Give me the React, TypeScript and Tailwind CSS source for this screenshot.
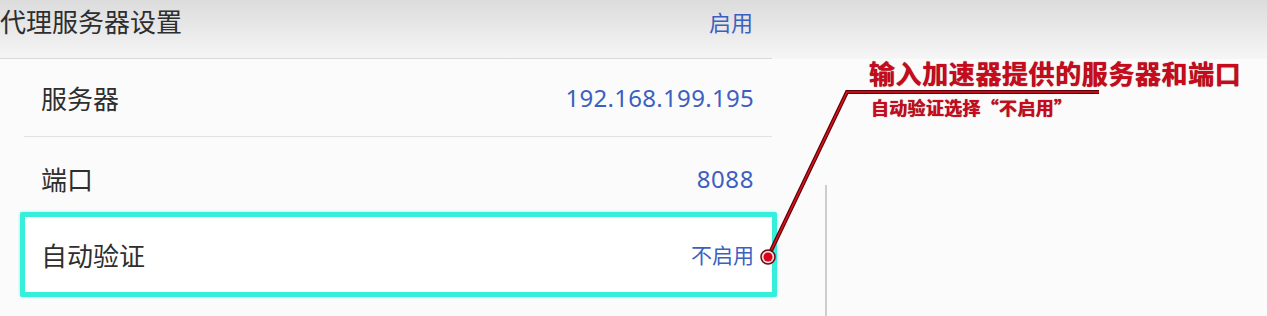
import React from "react";

const cjk = { fontFamily: '"Noto Sans CJK SC", "Noto Sans", sans-serif' };
const num = { fontFamily: '"Noto Sans", "Noto Sans CJK SC", sans-serif' };

export default function App() {
  return (
    <div
      className="relative w-[1267px] h-[316px] overflow-hidden bg-[#fbfbfb] text-[#2e2e2e]"
      style={cjk}
    >
      {/* header band */}
      <div className="flex h-[59px] bg-gradient-to-b from-[#dcdcdc] to-[#f6f6f6]">
        <div className="flex w-[772px] items-center justify-between border-b border-[#d9d9d9] pb-[16px]">
          <span className="text-[26px] leading-none">代理服务器设置</span>
          <span className="mr-[19px] text-[22px] leading-none text-[#3d5fbf]">启用</span>
        </div>
      </div>

      <div className="flex">
        <div className="flex w-[772px] flex-col">
          {/* 服务器 */}
          <div className="ml-[24px] flex h-[78px] items-center justify-between border-b border-[#e2e2e2] pl-[17px] pr-[18px]">
            <span className="text-[26px] leading-none">服务器</span>
            <span className="text-[24px] leading-none tracking-[0.3px] text-[#3d5fbf]" style={num}>
              192.168.199.195
            </span>
          </div>
          {/* 端口 */}
          <div className="ml-[24px] flex h-[75px] items-center justify-between pl-[17px] pr-[18px] pt-[8px]">
            <span className="text-[26px] leading-none">端口</span>
            <span className="text-[24px] leading-none tracking-[0.6px] text-[#3d5fbf]" style={num}>
              8088
            </span>
          </div>
          {/* 自动验证 highlighted */}
          <div className="ml-[20px] -mr-[5px] flex h-[85px] items-center justify-between rounded-[2px] border-[5px] border-[#36efdb] bg-white pl-[16px] pr-[18px] shadow-[0_0_3px_#7ff5e8]">
            <span className="text-[26px] leading-none">自动验证</span>
            <span className="text-[21px] leading-none text-[#3d5fbf]">不启用</span>
          </div>
        </div>
        <div className="ml-[53px] mt-[126px] h-[200px] w-[2px] bg-[#cdcdcd]" />
      </div>

      {/* annotation overlay */}
      <svg
        className="absolute left-0 top-0"
        width="1267"
        height="316"
        viewBox="0 0 1267 316"
      >
        <polyline
          points="768,257 847,92 1099,92"
          fill="none"
          stroke="#5a0008"
          strokeWidth="4"
          strokeLinejoin="miter"
        />
        <polyline
          points="768,257 847,92 1099,92"
          fill="none"
          stroke="#e0101e"
          strokeWidth="1.6"
          strokeLinejoin="miter"
        />
        <circle cx="768" cy="257" r="7" fill="#f3d6d8" stroke="#6a0a10" strokeWidth="1.5" />
        <circle cx="768" cy="257" r="4.5" fill="#d8001a" />
      </svg>

      <div className="absolute left-[869px] top-[60px] text-[26px] font-bold leading-none tracking-[0.6px] text-[#c80a1c] [text-shadow:0_0_1px_#6a0008]">
        输入加速器提供的服务器和端口
      </div>
      <div className="absolute left-[871px] top-[98px] text-[18px] font-bold leading-none tracking-[0.3px] text-[#c80a1c] [text-shadow:0_0_1px_#6a0008]">
        自动验证选择“不启用”
      </div>
    </div>
  );
}
